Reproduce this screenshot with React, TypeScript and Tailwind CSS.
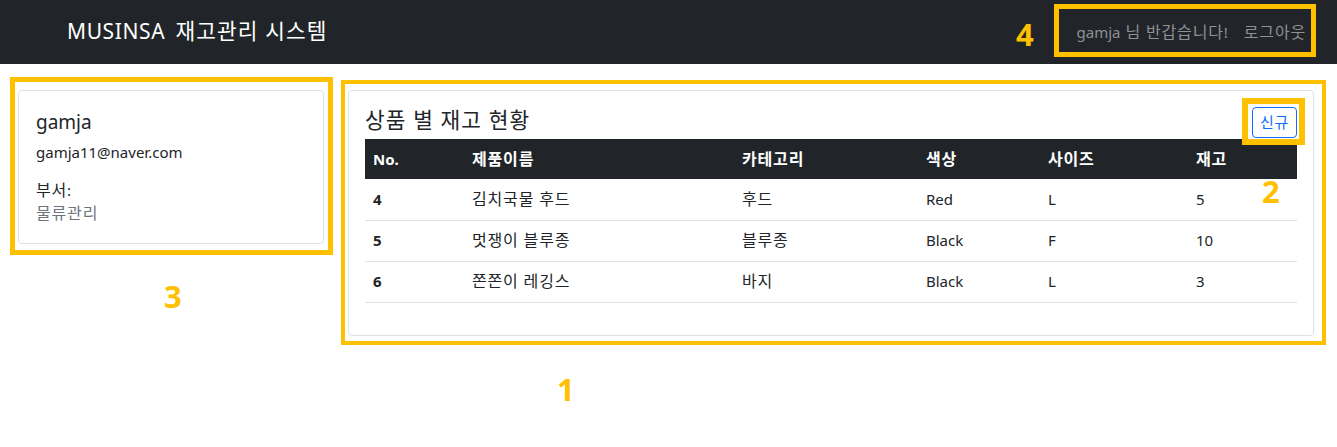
import React from 'react';

const rows = [
  { no: 4, name: '김치국물 후드', category: '후드', color: 'Red', size: 'L', stock: 5 },
  { no: 5, name: '멋쟁이 블루종', category: '블루종', color: 'Black', size: 'F', stock: 10 },
  { no: 6, name: '쫀쫀이 레깅스', category: '바지', color: 'Black', size: 'L', stock: 3 },
];

// hangul in the original renders wider than Noto's, so nudge size + spacing
const K: React.FC<{ children: React.ReactNode }> = ({ children }) => (
  <span className="text-[1.07em] leading-none tracking-[0.05em]">{children}</span>
);

const Marker: React.FC<{ className: string }> = ({ className }) => (
  <div className={`pointer-events-none absolute border-[#ffc000] ${className}`}></div>
);

const Num: React.FC<{ n: string; className: string }> = ({ n, className }) => (
  <div className={`pointer-events-none absolute text-[31px] font-bold leading-none text-[#ffc000] ${className}`}>{n}</div>
);

const App: React.FC = () => {
  return (
    <div className="relative min-h-[447px] bg-white text-[#212529] font-['Noto_Sans','Noto_Sans_CJK_KR',sans-serif]">
      <nav className="flex h-16 items-center justify-between bg-[#212529] pl-[67px] pr-[31px]">
        <span className="text-[20px] text-white">
          <span className="text-[21px] tracking-[0.6px]">MUSINSA</span>&nbsp; <K>재고관리 시스템</K>
        </span>
        <div className="flex items-center gap-[16px] text-[15px] text-[#8f9194]">
          <span>gamja<K> 님 반갑습니다</K>!</span>
          <span><K>로그아웃</K></span>
        </div>
      </nav>

      <div className="flex items-start gap-6 pl-[18px] pt-[26px]">
        <div className="w-[306px] rounded border border-[#dee2e6] px-[17px] pb-[18px] pt-[16px]">
          <div className="text-[19px] leading-[30px]">gamja</div>
          <div className="mt-[4px] text-[15px] leading-[22px]">gamja11@naver.com</div>
          <div className="mt-[16px] text-[15px] leading-[22px]"><K>부서</K>:</div>
          <div className="text-[15px] leading-[24px] text-[#6c757d]"><K>물류관리</K></div>
        </div>

        <div className="w-[966px] rounded border border-[#dee2e6] px-4 pb-4 pt-[16px]">
          <div className="flex items-end justify-between">
            <h2 className="pb-[4px] text-[20px] leading-[28px]"><K>상품 별 재고 현황</K></h2>
            <button className="mb-[1px] rounded border border-[#0d6efd] px-[7px] py-[3px] text-[14px] leading-[23px] text-[#0d6efd]">
              <K>신규</K>
            </button>
          </div>
          <table className="mb-4 w-full border-collapse text-left text-[15px]">
            <thead>
              <tr className="h-10 bg-[#212529] text-white">
                <th className="w-[99px] px-2 font-bold">No.</th>
                <th className="w-[270px] px-2 font-bold"><K>제품이름</K></th>
                <th className="w-[184px] px-2 font-bold"><K>카테고리</K></th>
                <th className="w-[122px] px-2 font-bold"><K>색상</K></th>
                <th className="w-[148px] px-2 font-bold"><K>사이즈</K></th>
                <th className="px-2 font-bold"><K>재고</K></th>
              </tr>
            </thead>
            <tbody>
              {rows.map((r) => (
                <tr key={r.no} className="h-[41px] border-b border-[#dee2e6]">
                  <td className="px-2 font-bold">{r.no}</td>
                  <td className="px-2"><K>{r.name}</K></td>
                  <td className="px-2"><K>{r.category}</K></td>
                  <td className="px-2">{r.color}</td>
                  <td className="px-2">{r.size}</td>
                  <td className="px-2">{r.stock}</td>
                </tr>
              ))}
            </tbody>
          </table>
        </div>
      </div>

      {/* annotation overlays */}
      <Marker className="left-[1054px] top-[4px] h-[53px] w-[262px] border-[5px]" />
      <Marker className="left-[10px] top-[77px] h-[178px] w-[323px] border-[5px]" />
      <Marker className="left-[341px] top-[80px] h-[265px] w-[985px] border-[4px]" />
      <Marker className="left-[1242px] top-[98px] h-[47px] w-[63px] border-[6px]" />
      <Num n="4" className="left-[1016px] top-[19px]" />
      <Num n="3" className="left-[164px] top-[281px]" />
      <Num n="2" className="left-[1262px] top-[176px]" />
      <Num n="1" className="left-[557px] top-[374px]" />
    </div>
  );
};

export default App;
